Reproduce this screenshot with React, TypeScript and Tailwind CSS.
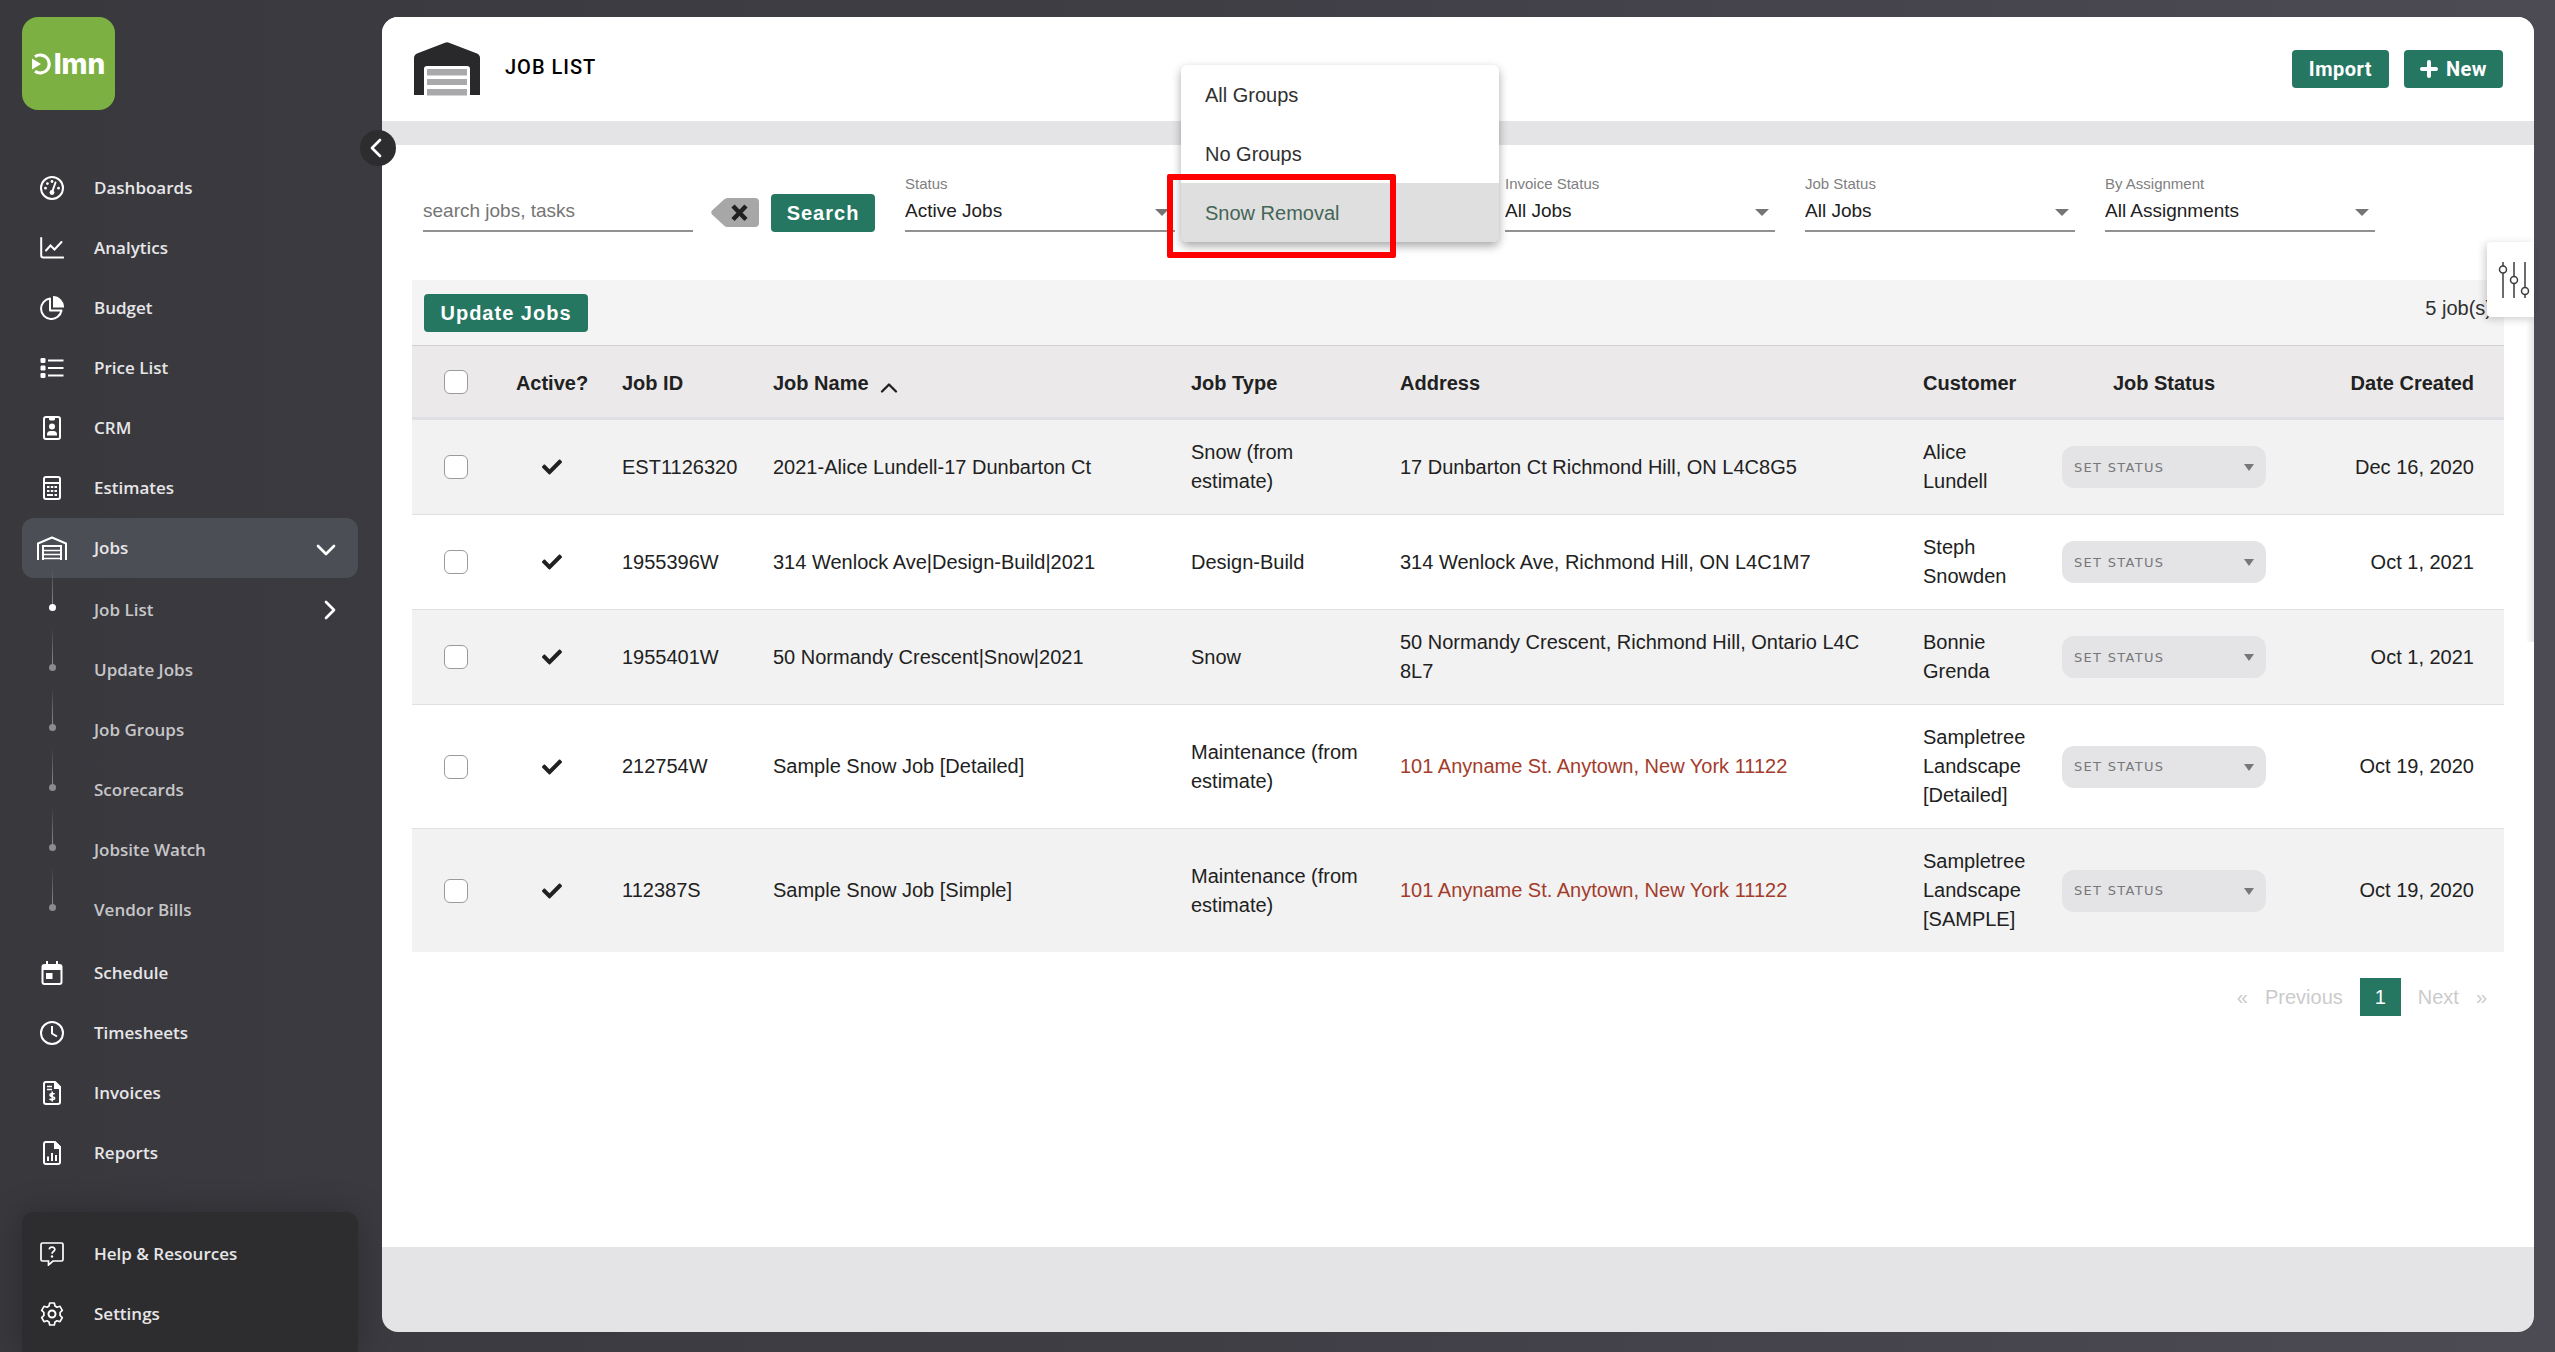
import { useState } from 'react';
import type { ReactNode } from 'react';
import { clsx } from 'clsx';
import { FaCheck } from 'react-icons/fa';
import { ChevronDown, ChevronLeft, ChevronRight, ChevronUp } from 'lucide-react';

type Job = {
  id: string;
  name: string;
  type: string;
  address: string;
  unverified?: boolean;
  customer: string;
  created: string;
};

const jobs: Job[] = [
  {
    id: 'EST1126320',
    name: '2021-Alice Lundell-17 Dunbarton Ct',
    type: 'Snow (from estimate)',
    address: '17 Dunbarton Ct Richmond Hill, ON L4C8G5',
    customer: 'Alice Lundell',
    created: 'Dec 16, 2020',
  },
  {
    id: '1955396W',
    name: '314 Wenlock Ave|Design-Build|2021',
    type: 'Design-Build',
    address: '314 Wenlock Ave, Richmond Hill, ON L4C1M7',
    customer: 'Steph Snowden',
    created: 'Oct 1, 2021',
  },
  {
    id: '1955401W',
    name: '50 Normandy Crescent|Snow|2021',
    type: 'Snow',
    address: '50 Normandy Crescent, Richmond Hill, Ontario L4C 8L7',
    customer: 'Bonnie Grenda',
    created: 'Oct 1, 2021',
  },
  {
    id: '212754W',
    name: 'Sample Snow Job [Detailed]',
    type: 'Maintenance (from estimate)',
    address: '101 Anyname St. Anytown, New York 11122',
    unverified: true,
    customer: 'Sampletree Landscape [Detailed]',
    created: 'Oct 19, 2020',
  },
  {
    id: '112387S',
    name: 'Sample Snow Job [Simple]',
    type: 'Maintenance (from estimate)',
    address: '101 Anyname St. Anytown, New York 11122',
    unverified: true,
    customer: 'Sampletree Landscape [SAMPLE]',
    created: 'Oct 19, 2020',
  },
];

const Icon = ({ children }: { children: ReactNode }) => (
  <svg viewBox="0 0 24 24" className="size-6" fill="none" stroke="currentColor" strokeWidth="2" aria-hidden="true">
    {children}
  </svg>
);

const DashboardIcon = () => (
  <Icon>
    <circle cx="12" cy="12" r="11" />
    <path d="M15.5 6.5 12.5 15" strokeLinecap="round" />
    <circle cx="12" cy="16.5" r="2.4" fill="currentColor" stroke="none" />
    <g fill="currentColor" stroke="none">
      <circle cx="5.5" cy="12.2" r="1.4" />
      <circle cx="7.4" cy="7.6" r="1.4" />
      <circle cx="12" cy="5.5" r="1.4" />
      <circle cx="18.5" cy="12.2" r="1.4" />
    </g>
  </Icon>
);

const AnalyticsIcon = () => (
  <Icon>
    <path d="M1.2 2v17.5a2 2 0 0 0 2 2h20" strokeLinecap="round" />
    <path d="m6 14.5 4.5-5 4 4 7-7.5" strokeLinecap="round" />
  </Icon>
);

const BudgetIcon = () => (
  <Icon>
    <path d="M10 2.5a10.3 10.3 0 1 0 11.5 12H10z" strokeLinejoin="round" />
    <path d="M13 0v11.500h11A11 11 0 0 0 13 0z" fill="currentColor" stroke="none" />
  </Icon>
);

const PriceListIcon = () => (
  <Icon>
    <path d="M8 4.5h15.500M8 12h15.500M8 19.500h15.500" />
    <g fill="currentColor" stroke="none">
      <rect x="0.5" y="2" width="5" height="5" rx="1.2" />
      <rect x="0.5" y="9.5" width="5" height="5" rx="1.2" />
      <rect x="0.5" y="17" width="5" height="5" rx="1.2" />
    </g>
  </Icon>
);

const CrmIcon = () => (
  <Icon>
    <rect x="4" y="1" width="16" height="22" rx="2" />
    <path d="M9 1h6v2a1.5 1.5 0 0 1-1.5 1.5h-3A1.5 1.5 0 0 1 9 3z" fill="currentColor" stroke="none" />
    <circle cx="12" cy="10.5" r="3" fill="currentColor" stroke="none" />
    <path d="M7 19.5V18a3.5 3.5 0 0 1 3.5-3h3A3.5 3.5 0 0 1 17 18v1.5z" fill="currentColor" stroke="none" />
  </Icon>
);

const EstimatesIcon = () => (
  <Icon>
    <rect x="4" y="1" width="16" height="22" rx="2" />
    <path d="M4 7h16" />
    <path d="M7 11h2.5M10.8 11h2.5M14.5 11H17M7 15h2.5M10.8 15h2.5M14.500 15H17M7 19h6M14.5 19H17" />
  </Icon>
);

const JobsIcon = () => (
  <svg viewBox="0 0 30 24" className="h-6 w-[30px] shrink-0" fill="none" stroke="currentColor" strokeWidth="2" aria-hidden="true">
    <path d="M1 24V7.5l14-6 14 6V24" strokeLinejoin="round" />
    <path d="M6 24V10h18v14" />
    <path d="M6 14.5h18M6 18.5h18M6 22.5h18" strokeWidth="1.6" />
  </svg>
);

const ScheduleIcon = () => (
  <Icon>
    <path d="M7 0v4M17 0v4" />
    <rect x="2.5" y="4" width="19" height="19" rx="2" />
    <path d="M2 4h20v5H2z" fill="currentColor" stroke="none" />
    <rect x="6" y="12" width="6.5" height="6" fill="currentColor" stroke="none" />
  </Icon>
);

const TimesheetsIcon = () => (
  <Icon>
    <circle cx="12" cy="12" r="11" />
    <path d="M12 5v7.5l5 3" />
  </Icon>
);

const InvoicesIcon = () => (
  <Icon>
    <path d="M6 1h9l5 5v15a2 2 0 0 1-2 2H6a2 2 0 0 1-2-2V3a2 2 0 0 1 2-2z" />
    <path d="M14 1h2l4.5 4.500V8H14z" fill="currentColor" stroke="none" />
    <path d="M7 5.5h5M7 8.5h5" strokeWidth="1.4" />
    <path d="M14.5 13.200c-.6-.9-4.600-1-4.600.9 0 2 4.700 1 4.700 3 0 2-4.200 1.800-5 .6M12.200 10.500v10" strokeWidth="1.6" />
  </Icon>
);

const ReportsIcon = () => (
  <Icon>
    <path d="M6 1h9l5 5v15a2 2 0 0 1-2 2H6a2 2 0 0 1-2-2V3a2 2 0 0 1 2-2z" />
    <path d="M14 1h2l4.5 4.500V8H14z" fill="currentColor" stroke="none" />
    <path d="M8 20v-4.5M12 20v-8M16 20v-6" />
  </Icon>
);

const HelpIcon = () => (
  <Icon>
    <path d="M2.500 1h19A1.500 1.500 0 0 1 23 2.500v15a1.500 1.500 0 0 1-1.500 1.500H13l-4.500 4v-4h-6A1.500 1.500 0 0 1 1 17.500v-15A1.500 1.500 0 0 1 2.500 1z" strokeWidth="1.7" />
    <path d="M9.300 7.300c.3-3 5.800-2.800 5.500.3-.2 1.800-2.800 1.900-2.800 4.200" strokeWidth="1.7" />
    <circle cx="12" cy="14.5" r="1.2" fill="currentColor" stroke="none" />
  </Icon>
);

const SettingsIcon = () => (
  <Icon>
    <path
      d="M9.700 1h4.600l.7 3 2 1.200 3-.9 2.300 4-2.200 2.200v3l2.200 2.200-2.300 4-3-.9-2 1.200-.7 3H9.700l-.7-3-2-1.200-3 .9-2.300-4 2.200-2.200v-3L1.700 8.300l2.300-4 3 .9L9 4z"
      strokeWidth="1.7"
      strokeLinejoin="round"
    />
    <circle cx="12" cy="12" r="3.5" />
  </Icon>
);

const GarageLogo = () => (
  <svg viewBox="0 0 66 54" className="h-[54px] w-[66px]" aria-hidden="true">
    <path d="M0 53V16q0-3 3-4.500L31 .8q2-1 4 0l28 10.700q3 1.500 3 4.500v37H56V27q0-3-3-3H13q-3 0-3 3v26z" fill="#29292b" />
    <path d="M13 27h40v6.500H13zM13 37h40v6H13zM13 47h40v6.500H13z" fill="#a9a9ab" />
  </svg>
);

const Logo = () => (
  <a href="#home" aria-label="LMN home" className="flex size-[93px] items-center justify-center rounded-2xl bg-[#7cb043] text-white">
    <svg viewBox="0 0 20 22" className="h-[22px] w-5" fill="none" aria-hidden="true">
      <path d="M3 3.700A9 9 0 1 1 3 18.300" stroke="currentColor" strokeWidth="3.2" />
      <path d="M0 5.500 9 11 0 16.500z" fill="currentColor" />
    </svg>
    <span className="ml-0.5 font-['Inter',sans-serif] text-[28px] leading-7 font-extrabold">lmn</span>
  </a>
);

const mainNav = [
  { label: 'Dashboards', icon: <DashboardIcon /> },
  { label: 'Analytics', icon: <AnalyticsIcon /> },
  { label: 'Budget', icon: <BudgetIcon /> },
  { label: 'Price List', icon: <PriceListIcon /> },
  { label: 'CRM', icon: <CrmIcon /> },
  { label: 'Estimates', icon: <EstimatesIcon /> },
];

const jobsNav = ['Job List', 'Update Jobs', 'Job Groups', 'Scorecards', 'Jobsite Watch', 'Vendor Bills'];

const lowerNav = [
  { label: 'Schedule', icon: <ScheduleIcon /> },
  { label: 'Timesheets', icon: <TimesheetsIcon /> },
  { label: 'Invoices', icon: <InvoicesIcon /> },
  { label: 'Reports', icon: <ReportsIcon /> },
];

const footerNav = [
  { label: 'Help & Resources', icon: <HelpIcon /> },
  { label: 'Settings', icon: <SettingsIcon /> },
];

const NavItem = ({ label, icon }: { label: string; icon: ReactNode }) => (
  <a href="#nav" className="flex h-[60px] items-center rounded-xl text-[#e6e6e8]">
    <span className="flex w-[60px] justify-center text-white">{icon}</span>
    <span className="ml-3">{label}</span>
  </a>
);

const Sidebar = () => (
  <nav className="flex w-[358px] shrink-0 flex-col pt-[17px] pl-[22px] font-['Open_Sans',sans-serif] text-[17px] font-semibold">
    <Logo />
    <div className="mt-12">
      {mainNav.map((item) => (
        <NavItem key={item.label} {...item} />
      ))}
      <button type="button" className="flex h-[60px] w-full items-center rounded-xl bg-[#4c4e55] text-[#e6e6e8]">
        <span className="flex w-[60px] justify-center text-white"><JobsIcon /></span>
        <span className="ml-3">Jobs</span>
        <ChevronDown className="mt-1 mr-4 ml-auto size-8 text-white" strokeWidth={2} />
      </button>
      <ul className="mb-[3px] pt-0.5">
        {jobsNav.map((label, i) => (
          <li key={label}>
            <a href="#jobs" className="flex h-[60px] items-center text-[#c6c6c9]">
              <span className="flex h-full w-[60px] flex-col items-center">
                <span className="-mt-3 h-[36px] w-px bg-linear-to-b from-transparent to-[#8b8b90]" />
                <span className={clsx('size-[7px] rounded-full', i === 0 ? 'bg-white' : 'bg-[#8b8b90]')} />
              </span>
              <span className="ml-3">{label}</span>
              {i === 0 && <ChevronRight className="mr-3 ml-auto size-8 text-white" strokeWidth={2} />}
            </a>
          </li>
        ))}
      </ul>
      {lowerNav.map((item) => (
        <NavItem key={item.label} {...item} />
      ))}
    </div>
    <div className="mt-auto rounded-t-xl bg-[#2d2d2f] pt-3 pb-2 shadow-[0_0_32px_rgba(0,0,0,0.25)]">
      {footerNav.map((item) => (
        <NavItem key={item.label} {...item} />
      ))}
    </div>
  </nav>
);

const GreenButton = ({ children, className }: { children: ReactNode; className?: string }) => (
  <button type="button" className={clsx('flex h-[38px] items-center justify-center rounded-sm bg-[#257762] font-bold text-white', className)}>
    {children}
  </button>
);

const FilterSelect = ({ id, label, value }: { id: string; label: string; value: string }) => (
  <div className="relative flex w-[270px] flex-col">
    <label htmlFor={id} className="text-[15px] leading-5 text-[#808080]">{label}</label>
    <select id={id} className="h-[38px] w-full appearance-none border-b-2 border-[#919191] pb-0.5 text-[19px] text-[#212121] outline-none">
      <option>{value}</option>
    </select>
    <span className="pointer-events-none absolute right-1.5 bottom-4 border-x-[7px] border-t-[7px] border-x-transparent border-t-[#757575]" />
  </div>
);

const groups = ['All Groups', 'No Groups', 'Snow Removal'];

const GroupFilter = () => {
  const [selected, setSelected] = useState('Snow Removal');

  return (
    <div className="relative h-[58px] w-[270px]">
      <div role="listbox" aria-label="Job groups" className="absolute -bottom-2.5 -left-6 z-10 w-[318px] overflow-hidden rounded-md bg-white shadow-[0_4px_10px_rgba(0,0,0,0.35)]">
        {groups.map((group) => (
          <button
            key={group}
            type="button"
            role="option"
            aria-selected={group === selected}
            onClick={() => setSelected(group)}
            className={clsx(
              'flex h-[59px] w-full items-center px-6 text-left text-xl',
              group === selected ? 'bg-[#dfdfdf] text-[#446556]' : 'text-[#303030]',
            )}
          >
            {group}
          </button>
        ))}
      </div>
      <div className="pointer-events-none absolute top-0 -left-[38px] z-20 h-[84px] w-[229px] rounded-xs border-[6px] border-[#fe0000]" />
    </div>
  );
};

const Filters = () => (
  <div className="flex h-[58px] items-end px-[11px]">
    <input
      type="text"
      aria-label="Search jobs"
      placeholder="search jobs, tasks"
      className="h-[38px] w-[270px] border-b-2 border-[#919191] pb-0.5 text-[19px] outline-none placeholder:text-[#757575]"
    />
    <button type="button" aria-label="Clear search" className="mb-[5px] ml-[18px]">
      <svg viewBox="0 0 48 29" className="h-[29px] w-12" aria-hidden="true">
        <path d="M13 1.500Q14.500 0 16.500 0H44q4 0 4 4v21q0 4-4 4H16.500q-2 0-3.500-1.500L1 16.500q-1.500-2 0-4z" fill="#a7a7a7" />
        <path d="m22 8 13 13.500M35 8 22 21.500" stroke="#212121" strokeWidth="4.5" />
      </svg>
    </button>
    <GreenButton className="ml-3 w-[104px] text-xl tracking-wider">Search</GreenButton>
    <div className="ml-[30px] flex gap-[30px]">
      <FilterSelect id="status" label="Status" value="Active Jobs" />
      <GroupFilter />
      <FilterSelect id="invoice-status" label="Invoice Status" value="All Jobs" />
      <FilterSelect id="job-status" label="Job Status" value="All Jobs" />
      <FilterSelect id="assignment" label="By Assignment" value="All Assignments" />
    </div>
  </div>
);

const Checkbox = ({ label }: { label: string }) => (
  <input type="checkbox" aria-label={label} className="mx-auto block size-6 appearance-none rounded-md border border-[#9a9a9a] bg-white checked:bg-[#257762]" />
);

const JobTable = () => (
  <table className="w-full table-fixed border-collapse text-left text-xl leading-[29px] text-[#212121]">
    <colgroup>
      <col className="w-[88px]" />
      <col className="w-[104px]" />
      <col className="w-[151px]" />
      <col className="w-[418px]" />
      <col className="w-[209px]" />
      <col />
      <col className="w-[142px]" />
      <col className="w-[234px]" />
      <col className="w-[223px]" />
    </colgroup>
    <thead>
      <tr className="h-[73px] border-t border-b-3 border-t-[#d0d0d0] border-b-[#dee0e5] bg-[#ebe9ea]">
        <th><Checkbox label="Select all jobs" /></th>
        <th className="pt-1 text-center">Active?</th>
        <th className="px-[18px] pt-1">Job ID</th>
        <th className="px-[18px] pt-1">
          <button type="button" className="flex items-center gap-1.5">
            Job Name <ChevronUp className="-mb-2 size-7" strokeWidth={2} />
          </button>
        </th>
        <th className="px-[18px] pt-1">Job Type</th>
        <th className="px-[18px] pt-1">Address</th>
        <th className="px-[18px] pt-1">Customer</th>
        <th className="pt-1 text-center">Job Status</th>
        <th className="pt-1 pr-[30px] text-right">Date Created</th>
      </tr>
    </thead>
    <tbody>
      {jobs.map((job) => (
        <tr key={job.id} className="border-b border-[#dee0e2] odd:bg-[#f2f2f2] last:border-0">
          <td><Checkbox label={`Select ${job.name}`} /></td>
          <td><FaCheck className="mx-auto size-5" aria-label="Active" /></td>
          <td className="px-[18px] py-[18px]">{job.id}</td>
          <td className="px-[18px]">{job.name}</td>
          <td className="px-[18px]">{job.type}</td>
          <td className={clsx('px-[18px]', job.unverified && 'text-[#a33c2c]')}>{job.address}</td>
          <td className="px-[18px] py-[18px]">{job.customer}</td>
          <td className="px-[15px]">
            <div className="relative">
              <select aria-label={`Status of ${job.name}`} className="block h-[42px] w-full appearance-none rounded-xl bg-[#e4e4e6] px-3 font-['DejaVu_Sans',sans-serif] text-[13px] tracking-widest text-[#77777a]">
                <option>SET STATUS</option>
              </select>
              <span className="pointer-events-none absolute top-[18px] right-3 border-x-[5px] border-t-[7px] border-x-transparent border-t-[#77777a]" />
            </div>
          </td>
          <td className="pr-[30px] text-right">{job.created}</td>
        </tr>
      ))}
    </tbody>
  </table>
);

const Pagination = () => (
  <nav aria-label="Pagination" className="mt-[26px] flex h-[38px] items-center justify-end pr-[17px] text-xl text-[#cbcbcb]">
    <a href="#first" className="mr-[17px]">«</a>
    <a href="#previous" className="mr-[17px]">Previous</a>
    <a href="#1" aria-current="page" className="flex h-full w-[41px] items-center justify-center bg-[#257762] text-white">1</a>
    <a href="#next" className="ml-[17px]">Next</a>
    <a href="#last" className="ml-[17px]">»</a>
  </nav>
);

const App = () => {
  return (
    <div className="flex min-h-screen bg-linear-to-r from-[#39383d] via-[#403f46] to-[#4c4b54] font-['Liberation_Sans',Arial,sans-serif]">
      <Sidebar />
      <div className="flex min-w-0 grow flex-col pt-[17px] pr-[21px] pb-5 pl-6">
        <main className="relative flex grow flex-col rounded-2xl bg-[#e4e4e6]">
          <button type="button" aria-label="Collapse sidebar" className="absolute top-[113px] -left-[22px] flex size-9 items-center justify-center rounded-full bg-[#2d2d2f] text-white">
            <ChevronLeft className="mr-1 size-8" strokeWidth={2} />
          </button>
          <header className="flex h-[104px] items-center rounded-t-2xl bg-white pr-[31px] pl-8 font-['Roboto',sans-serif]">
            <GarageLogo />
            <h1 className="ml-[25px] pb-1 text-xl font-medium tracking-wider text-black">JOB LIST</h1>
            <GreenButton className="ml-auto w-[97px] text-xl tracking-wide">Import</GreenButton>
            <GreenButton className="ml-[15px] w-[99px] gap-2 text-xl tracking-wide">
              <svg viewBox="0 0 18 18" className="size-[18px]" stroke="currentColor" strokeWidth="4" strokeLinecap="round" aria-hidden="true">
                <path d="M9 2v14M2 9h14" />
              </svg>
              New
            </GreenButton>
          </header>
          <section className="mt-6 mb-[85px] grow bg-white px-[30px] pt-[29px]">
            <Filters />
            <div className="mt-12 flex h-[65px] items-center justify-between bg-[#f4f4f4] pr-3 pl-3">
              <GreenButton className="w-[164px] text-xl tracking-wider">Update Jobs</GreenButton>
              <span className="pb-2.5 text-xl text-[#303030]">5 job(s)</span>
            </div>
            <JobTable />
            <Pagination />
          </section>
          {/* edge shadow of the closed options drawer */}
          <div className="pointer-events-none absolute top-[225px] right-0 h-[400px] w-2 overflow-hidden bg-linear-to-l from-black/10 to-transparent" />
          <button type="button" aria-label="Table options" className="absolute top-[225px] right-0 flex h-[75px] w-[47px] items-center justify-end rounded-l-sm bg-white pr-1 shadow-[-2px_2px_8px_rgba(0,0,0,0.2)]">
            <svg viewBox="0 0 32 36" className="h-9 w-8" fill="none" stroke="#3c3c3c" strokeWidth="1.5" aria-hidden="true">
              <path d="M5 0v4M5 11v25M16 0v14M16 21v15M27 0v25M27 32v4" />
              <circle cx="5" cy="7.5" r="3.5" />
              <circle cx="16" cy="18" r="3.5" />
              <circle cx="27" cy="29" r="3.5" />
            </svg>
          </button>
        </main>
      </div>
    </div>
  );
};

export default App;
